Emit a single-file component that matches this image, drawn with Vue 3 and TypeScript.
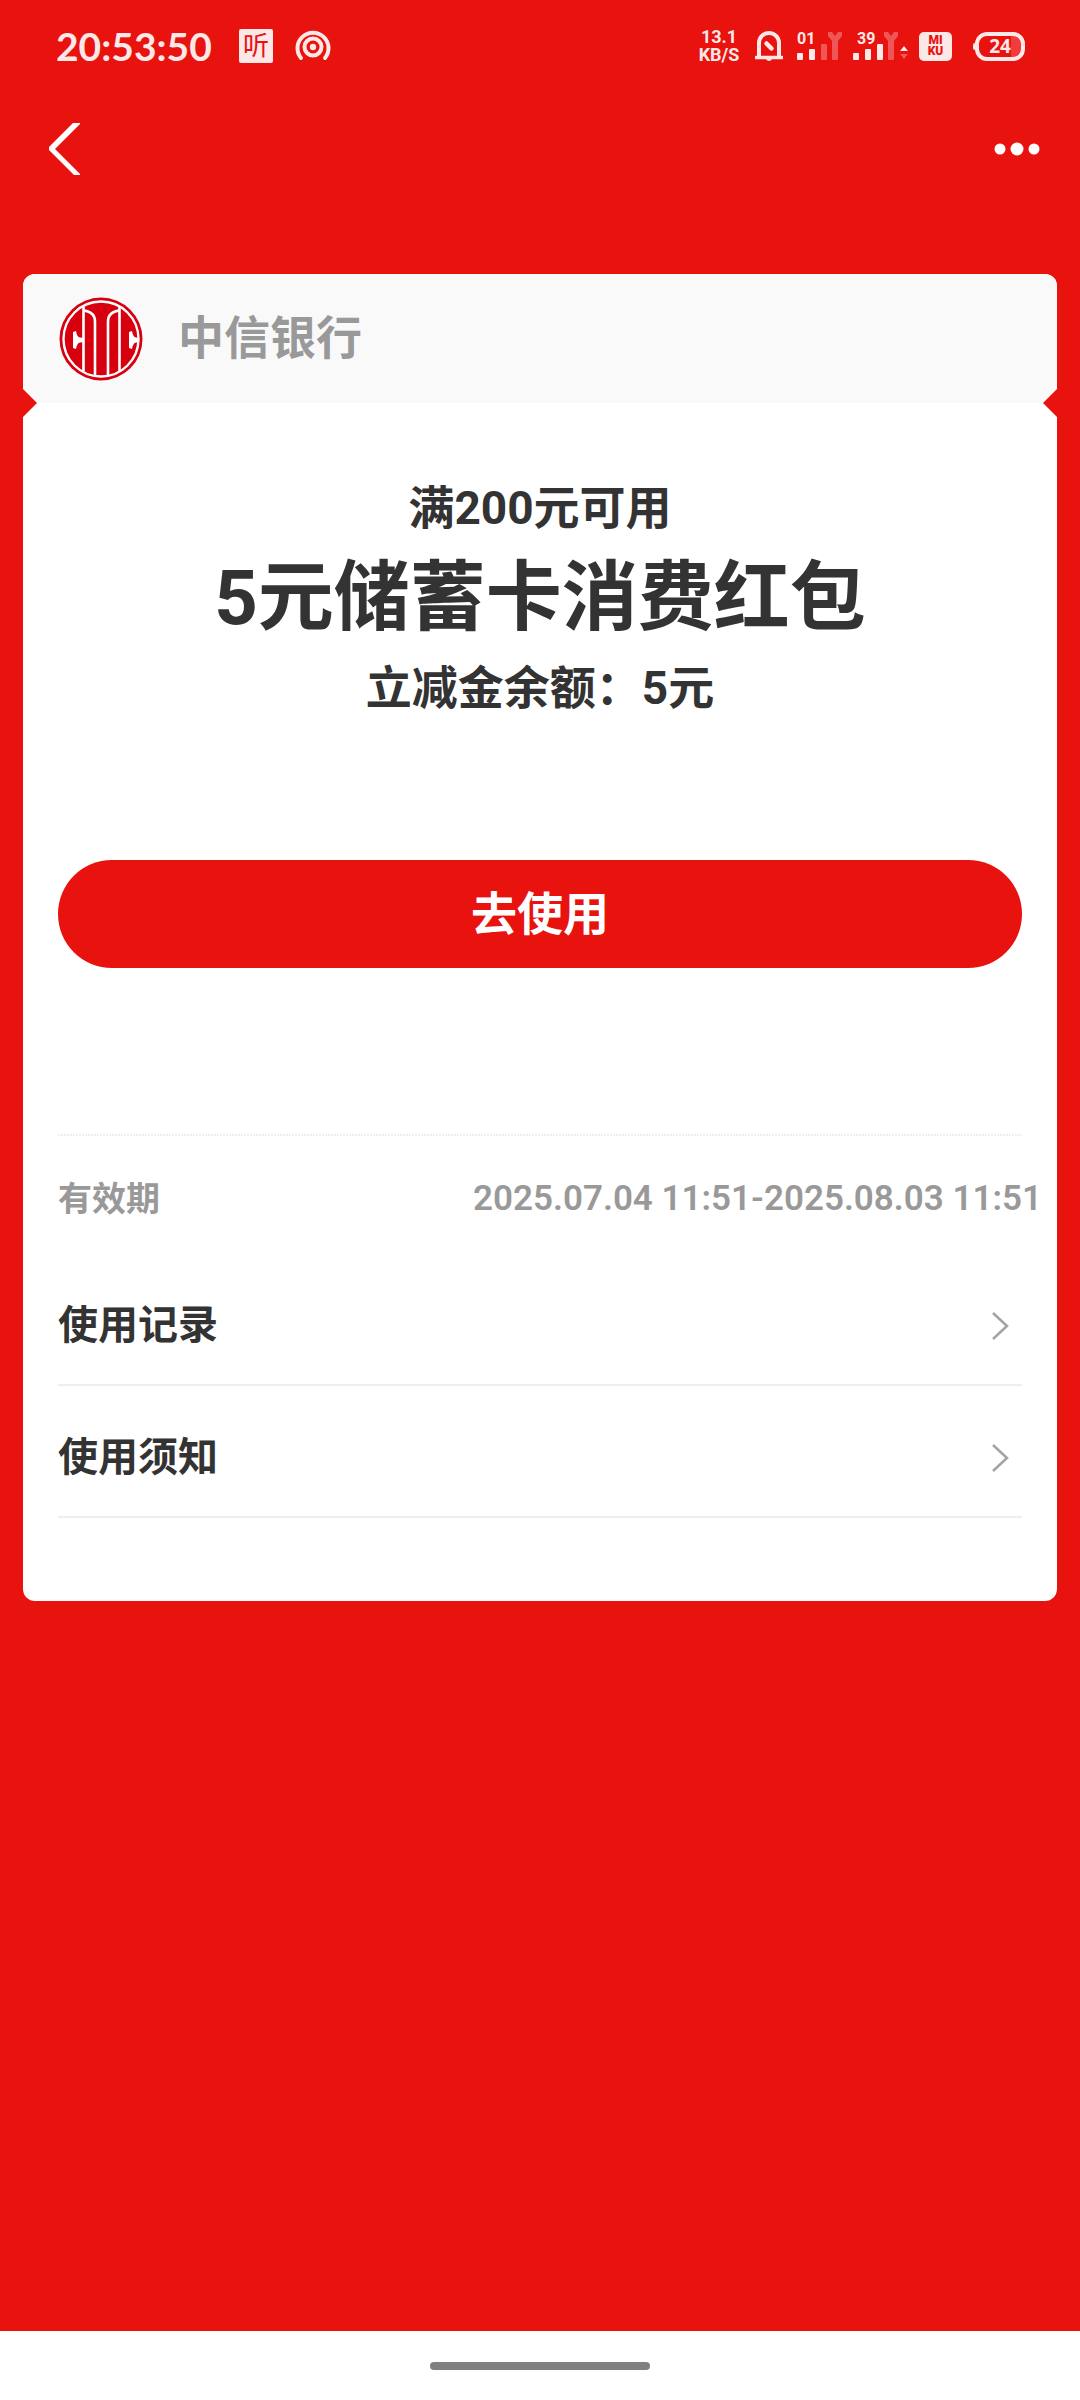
<script setup lang="ts">
interface Entry {
  id: string
  label: string
}

const bank = '中信银行'
const validity = '2025.07.04 11:51-2025.08.03 11:51'
const entries: Entry[] = [
  { id: 'records', label: '使用记录' },
  { id: 'notice', label: '使用须知' },
]
</script>

<template>
  <div class="page">
    <div class="status">
      <div class="status-left">
        <span class="clock">20:53:50</span>
        <span class="listen">听</span>
        <svg class="ring" width="36" height="36" viewBox="0 0 36 36" aria-hidden="true">
          <g fill="none" stroke="#fde8e8" stroke-width="4">
            <path d="M6 30A15.500 15.500 0 1 1 30 30" stroke-linecap="round" />
            <circle cx="18" cy="19" r="8.500" />
          </g>
          <circle cx="18" cy="19" r="3.200" fill="#fde8e8" />
        </svg>
      </div>
      <div class="status-right">
        <div class="speed"><span>13.1</span><span>KB/S</span></div>
        <svg class="bell" width="28" height="32" viewBox="0 0 28 32" aria-hidden="true">
          <g fill="none" stroke="#fde8e8">
            <path d="M4 27V13a10 10 0 0 1 20 0v14" stroke-width="4" />
            <path d="M1 27.500h26" stroke-width="3.500" stroke-linecap="round" />
            <path d="M11.500 13.500l5 5" stroke-width="4.500" stroke-linecap="round" />
          </g>
          <path d="M11 29h6q-1 2-3 2t-3-2z" fill="#fde8e8" />
        </svg>
        <svg class="signal" width="46" height="38" viewBox="0 -4 46 38" aria-hidden="true">
          <text x="0" y="13">01</text>
          <g fill="#fde8e8">
            <rect x="0" y="22" width="6" height="7" rx="1" />
            <rect x="12" y="18" width="6" height="11" rx="1" />
          </g>
          <g fill="#f15656">
            <rect x="24" y="13" width="6" height="16" rx="1" />
            <path d="M31 1h4l3 4 3-4h4v4l-4 5v18q0 1-1 1h-4q-1 0-1-1V10l-4-5z" />
          </g>
        </svg>
        <svg class="signal wide" width="56" height="38" viewBox="0 -4 56 38" aria-hidden="true">
          <text x="4" y="13">39</text>
          <g fill="#fde8e8">
            <rect x="0" y="22" width="6" height="7" rx="1" />
            <rect x="12" y="18" width="6" height="11" rx="1" />
            <rect x="24" y="13" width="6" height="16" rx="1" />
            <path d="M47 20l4-5 4 5z" />
          </g>
          <g fill="#f15656">
            <path d="M31 1h4l3 4 3-4h4v4l-4 5v18q0 1-1 1h-4q-1 0-1-1V10l-4-5z" />
            <path d="M47 23l4 5 4-5z" />
          </g>
        </svg>
        <div class="miku"><span>MI</span><span>KU</span></div>
        <div class="battery">24</div>
      </div>
    </div>

    <header class="nav">
      <button class="icon-button" type="button" aria-label="返回">
        <svg width="32" height="52" viewBox="0 0 32 52">
          <path d="M24 0h7v1L6 26l25 25v1h-6L0 27v-3z" fill="#fff" />
        </svg>
      </button>
      <button class="icon-button" type="button" aria-label="更多">
        <svg width="46" height="14" viewBox="0 0 46 14">
          <g fill="#fff">
            <circle cx="6" cy="7" r="5.500" />
            <circle cx="23" cy="7" r="6.500" />
            <circle cx="40" cy="7" r="5.500" />
          </g>
        </svg>
      </button>
    </header>

    <main class="card">
      <div class="card-head">
        <svg class="logo" width="84" height="84" viewBox="0 0 84 84" aria-hidden="true">
          <circle cx="42" cy="42" r="41.500" fill="#d7000f" />
          <circle cx="42" cy="42" r="37.500" fill="none" stroke="#fff" stroke-width="2.400" />
          <g fill="none" stroke="#fff" stroke-width="2.600">
            <path d="M24.500 10v64M60.500 10v64" />
            <path d="M25 13.500c7 1 11 5 11 11V79M60 13.500c-7 1-11 5-11 11V79" />
          </g>
          <path d="M14 35l3-1q1 6 4 6.500l4 .5v4l-4 .5q-3 .5-4 6.500l-3-1z" fill="#fff" />
          <path d="M70 35l3-1q1 6 4 6.500l3 .5v4l-3 .5q-3 .5-4 6.500l-3-1z" fill="#fff" />
        </svg>
        <span class="bank">{{ bank }}</span>
      </div>

      <div class="card-body">
        <p class="line">满200元可用</p>
        <h1 class="title">5元储蓄卡消费红包</h1>
        <p class="line">立减金余额：5元</p>
        <button class="use" type="button">去使用</button>
        <div class="validity">
          <span>有效期</span>
          <span class="period">{{ validity }}</span>
        </div>
        <button v-for="entry in entries" :key="entry.id" class="entry" type="button">
          <span>{{ entry.label }}</span>
          <svg width="17" height="28" viewBox="0 0 17 28" aria-hidden="true">
            <path d="M1 1l14 13L1 27" fill="none" stroke="#a3a3a3" stroke-width="2.500" />
          </svg>
        </button>
      </div>
    </main>

    <footer class="home"><span class="pill"></span></footer>
  </div>
</template>

<style>
body {
  margin: 0;
  background: #e8120f;
}
</style>

<style scoped>
.page {
  display: flex;
  flex-direction: column;
  min-height: 100vh;
  background: #e8120f;
  color: #333;
  font-family: Roboto, "Noto Sans CJK SC", sans-serif;
  font-weight: 700;
}

button {
  border: 0;
  padding: 0;
  background: none;
  color: inherit;
  font: inherit;
  cursor: pointer;
}

svg {
  display: block;
}

.status {
  display: flex;
  justify-content: space-between;
  align-items: center;
  height: 92px;
  padding: 0 55px 0 56px;
  color: #fde8e8;
}

.status-left,
.status-right {
  display: flex;
  align-items: center;
}

.clock {
  width: 156px;
  font-family: Lato, sans-serif;
  font-size: 39px;
  line-height: 44px;
}

.listen {
  width: 34px;
  height: 34px;
  margin-left: 27px;
  border-radius: 2px;
  background: #fde8e8;
  color: #e8120f;
  font-size: 26px;
  font-weight: 400;
  line-height: 34px;
  text-align: center;
}

.ring {
  margin-left: 22px;
}

.speed {
  display: flex;
  flex-direction: column;
  align-items: center;
  width: 46px;
  font-family: Roboto, sans-serif;
  font-size: 18px;
  line-height: 18px;
}

.bell {
  margin-left: 13px;
}

.signal {
  margin-left: 14px;
}

.signal.wide {
  margin-left: 10px;
}

.signal text {
  fill: #fde8e8;
  font-family: Roboto, sans-serif;
  font-size: 16px;
  font-weight: 700;
}

.miku {
  display: flex;
  flex-direction: column;
  align-items: center;
  justify-content: center;
  width: 33px;
  height: 29px;
  margin-left: 10px;
  border-radius: 5px;
  background: #fde8e8;
  color: #e8120f;
  font-size: 12px;
  font-weight: 900;
  line-height: 11px;
}

.battery {
  position: relative;
  box-sizing: border-box;
  width: 50px;
  height: 29px;
  margin-left: 23px;
  border: 4px solid #fde8e8;
  border-radius: 12px;
  background: linear-gradient(90deg, transparent 32px, #f03c3c 32px);
  font-family: "Noto Sans", sans-serif;
  font-size: 19px;
  line-height: 21px;
  text-align: center;
}

.battery::before {
  content: "";
  position: absolute;
  top: 7px;
  left: -6px;
  width: 4px;
  height: 7px;
  border-radius: 2px;
  background: #fde8e8;
}

.nav {
  display: flex;
  justify-content: space-between;
  align-items: center;
  height: 114px;
  padding: 0 40px 0 49px;
}

.card {
  margin: 68px 23px 0;
  border-radius: 12px;
  background: #fff;
}

.card-head {
  position: relative;
  display: flex;
  align-items: center;
  height: 129px;
  padding-left: 36px;
  border-radius: 12px 12px 0 0;
  background: #f9f9f9;
}

.card-head::before,
.card-head::after {
  content: "";
  position: absolute;
  bottom: -14px;
  width: 14px;
  height: 28px;
  background: #e8120f;
}

.card-head::before {
  left: 0;
  clip-path: polygon(0 0, 100% 50%, 0 100%);
}

.card-head::after {
  right: 0;
  clip-path: polygon(100% 0, 0 50%, 100% 100%);
}

.bank {
  margin-left: 35px;
  padding-bottom: 2px;
  color: #999;
  font-size: 46px;
  line-height: 64px;
}

.card-body {
  padding: 65px 35px 83px;
}

.line {
  margin: 0;
  font-size: 46px;
  line-height: 80px;
  text-align: center;
}

.title {
  margin: 0;
  font-size: 76px;
  line-height: 100px;
  text-align: center;
}

.use {
  display: block;
  width: 100%;
  height: 108px;
  margin: 132px 0 166px;
  padding-bottom: 8px;
  border-radius: 54px;
  background: #e8120f;
  color: #fff;
  font-size: 46px;
}

.validity {
  display: flex;
  justify-content: space-between;
  align-items: center;
  box-sizing: border-box;
  height: 120px;
  margin-right: -20px;
  padding-top: 10px;
  background: repeating-linear-gradient(90deg, #eee 0 2px, #fff 2px 3px) 0 0 / calc(100% - 20px) 2px no-repeat;
  color: #999;
  font-size: 34px;
  line-height: 48px;
}

.period {
  font-size: 35px;
  font-weight: 600;
  white-space: nowrap;
}

.entry {
  display: flex;
  justify-content: space-between;
  align-items: center;
  box-sizing: border-box;
  width: 100%;
  height: 132px;
  padding: 14px 13px 0 0;
  border-bottom: 2px solid #eee;
  font-size: 40px;
  line-height: 56px;
}

.home {
  display: flex;
  justify-content: center;
  align-items: center;
  height: 69px;
  margin-top: auto;
  background: #fff;
}

.pill {
  width: 220px;
  height: 8px;
  border-radius: 4px;
  background: #808080;
}
</style>
